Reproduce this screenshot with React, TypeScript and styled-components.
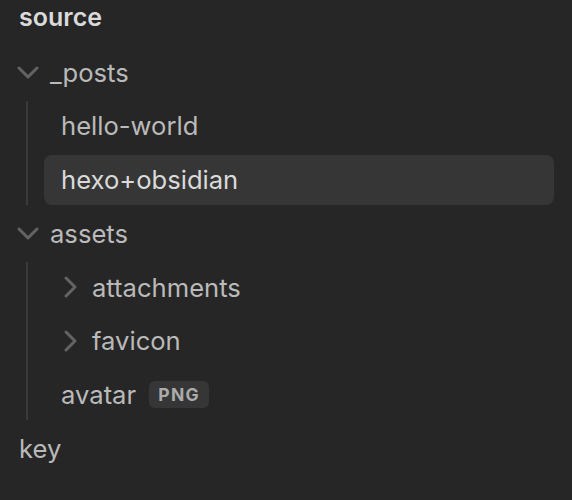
import React from "react";
import styled, { createGlobalStyle } from "styled-components";

const Global = createGlobalStyle`
  html, body { margin: 0; padding: 0; background: #262626; }
  body { font-family: Inter, "Noto Sans", sans-serif; -webkit-font-smoothing: antialiased; }
`;

const Explorer = styled.div`
  width: 572px;
  height: 500px;
  background: #262626;
  padding-right: 18px;
  box-sizing: border-box;
  overflow: hidden;
`;

const RootTitle = styled.div`
  height: 34px;
  line-height: 34px;
  padding-left: 19px;
  margin-bottom: 13px;
  font-size: 25px;
  font-weight: 600;
  color: #dadada;
`;

const Row = styled.div<{ $selected?: boolean; $folder?: boolean }>`
  display: flex;
  align-items: center;
  height: 50px;
  margin-bottom: 3.8px;
  padding-left: ${(p) => (p.$folder ? "14px" : "17px")};
  gap: 10px;
  border-radius: 8px;
  font-size: 25.6px;
  color: ${(p) => (p.$selected ? "#dadada" : "#bababa")};
  background: ${(p) => (p.$selected ? "#363636" : "transparent")};
`;

const Tree = styled.div`
  margin-left: 2px;
`;

const Children = styled.div`
  margin-left: 24px;
  border-left: 2px solid #3a3a3a;
  padding-left: 16px;
`;

const Chevron = styled.svg<{ $collapsed?: boolean }>`
  width: 24px;
  height: 24px;
  flex: none;
  transform: ${(p) => (p.$collapsed ? "rotate(-90deg)" : "none")};
`;

const Badge = styled.span`
  display: inline-flex;
  align-items: center;
  justify-content: center;
  height: 27px;
  padding: 0 9px;
  margin-left: 3px;
  border-radius: 6px;
  background: #363636;
  color: #ababab;
  font-size: 17.5px;
  font-weight: 700;
  letter-spacing: 1.4px;
`;

const Icon = ({ collapsed }: { collapsed?: boolean }) => (
  <Chevron viewBox="0 0 24 24" $collapsed={collapsed}>
    <path
      d="M3 8L12 17L21 8"
      fill="none"
      stroke="#636363"
      strokeWidth={3}
      strokeLinecap="round"
      strokeLinejoin="round"
    />
  </Chevron>
);

export default function App() {
  return (
    <>
      <Global />
      <Explorer>
        <RootTitle>source</RootTitle>
        <Tree>
          <Row $folder>
            <Icon />
            <span>_posts</span>
          </Row>
          <Children>
            <Row>hello-world</Row>
            <Row $selected>hexo+obsidian</Row>
          </Children>
          <Row $folder>
            <Icon />
            <span>assets</span>
          </Row>
          <Children>
            <Row $folder>
              <Icon collapsed />
              <span>attachments</span>
            </Row>
            <Row $folder>
              <Icon collapsed />
              <span>favicon</span>
            </Row>
            <Row>
              <span>avatar</span>
              <Badge>PNG</Badge>
            </Row>
          </Children>
          <Row>key</Row>
        </Tree>
      </Explorer>
    </>
  );
}
